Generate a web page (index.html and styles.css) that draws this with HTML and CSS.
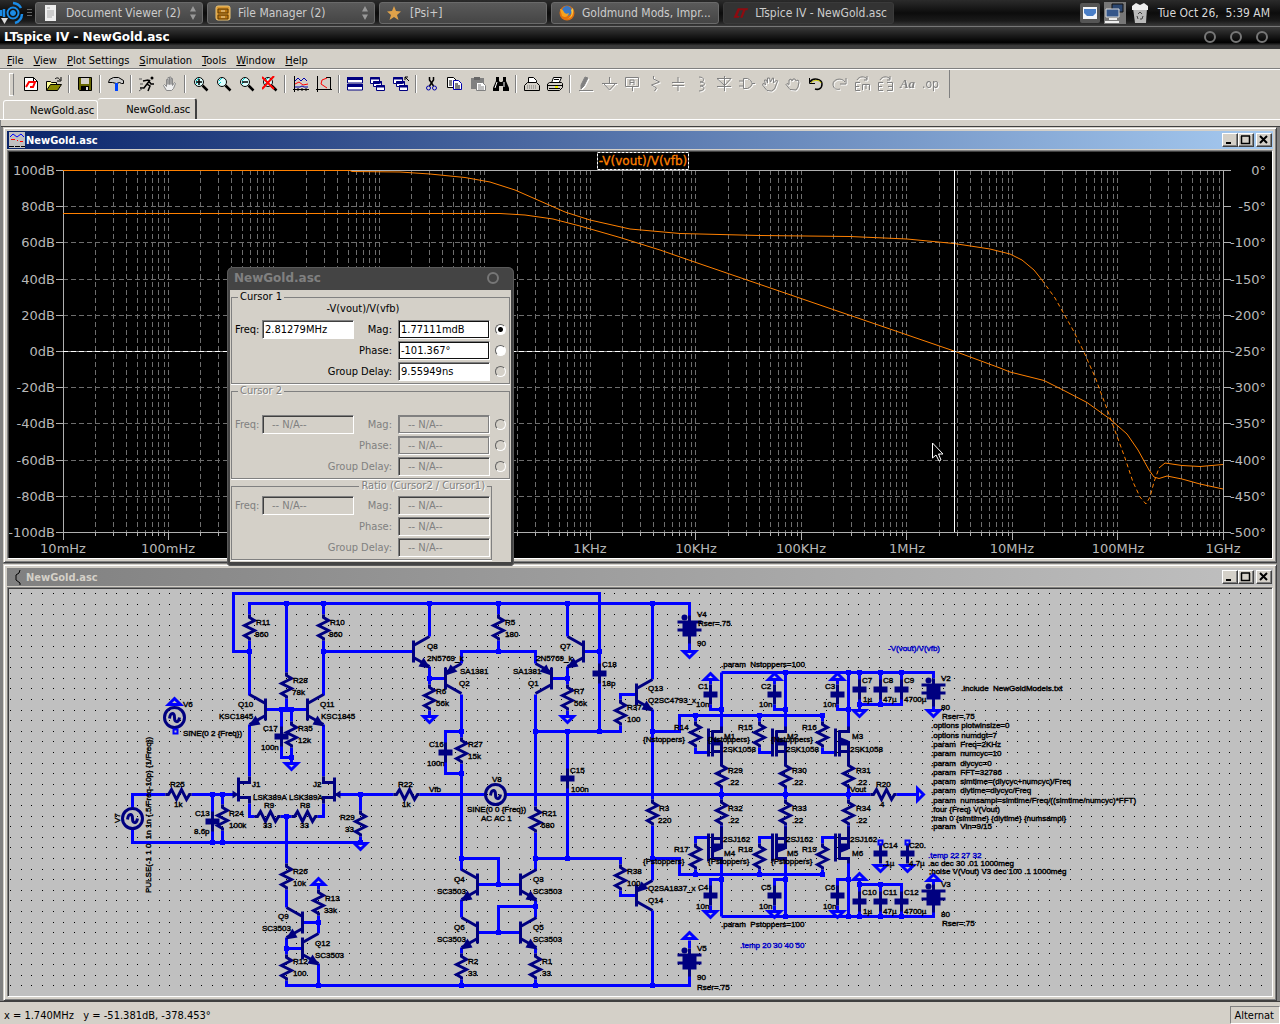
FILE: index.html
```html
<!DOCTYPE html>
<html lang="en">
<head>
    <meta charset="UTF-8">
    <meta name="viewport" content="width=device-width, initial-scale=1.0">
    <title>LTspice IV - NewGold.asc</title>
    <link rel="stylesheet" href="styles.css">
</head>
<body>

<header class="panel">
    <button type="button" class="launcher" aria-label="Menu">
        <svg width="24" height="24" viewBox="0 0 24 24" fill="none" stroke="#1b8be6">
            <circle cx="13" cy="12" r="2.5" fill="#1b8be6"/>
            <circle cx="13" cy="12" r="5.5" stroke-width="2"/>
            <path d="M13 2a10 10 0 0 1 8 5M22 13a10 10 0 0 1-7 9M4 8v8M1 9v6" stroke-width="2.5"/>
            <path d="M1 17h7l-3.500 6z" fill="#ddd" stroke="none"/>
        </svg>
    </button>
    <span class="grip"></span>
    <nav class="tasks">
        <button type="button" class="task">
            <svg width="18" height="18" viewBox="0 0 18 18"><path d="M3 1h11v16H3z" fill="#eee"/><path d="M5 4h3M5 7h7M5 9h7M5 11h7M5 13h5" stroke="#aaa"/></svg>
            <span>Document Viewer (2)</span><i class="spin"></i>
        </button>
        <button type="button" class="task">
            <svg width="18" height="18" viewBox="0 0 18 18"><rect x="2" y="2" width="14" height="14" rx="2" fill="#d9962f" stroke="#ecc578"/><path d="M4 5h10v4H4zM4 11h10v4H4z" fill="#b97510" stroke="#5c3b06"/><path d="M7 7h4M7 13h4" stroke="#f5dfae"/></svg>
            <span>File Manager (2)</span><i class="spin"></i>
        </button>
        <button type="button" class="task">
            <svg width="18" height="18" viewBox="0 0 18 18"><path d="M8 2l2 5 5 .5-4 3.500 1.500 5L8 13l-4.500 3L5 11 1 7.500 6 7z" fill="#e0a24a"/></svg>
            <span>[Psi+]</span>
        </button>
        <button type="button" class="task">
            <svg width="18" height="18" viewBox="0 0 18 18"><circle cx="9" cy="9" r="7.500" fill="#e0700d"/><circle cx="9" cy="7" r="5" fill="#3a78c4"/><path d="M2 5c2 0 3 1 4 3s3 2 5 1c-1 4-4 5-7 3z" fill="#f6a21d"/><path d="M15 4c1 6-1 10-6 11 5-2 5-6 4-9z" fill="#f9c440"/></svg>
            <span>Goldmund Mods, Impr...</span>
        </button>
        <button type="button" class="task active">
            <svg width="18" height="18" viewBox="0 0 18 18"><path d="M6 4H17L16 6H14L11 14H8.500L11.500 6H8L5.500 12H8L7 14H1.500L2.500 12z" fill="#8e0b10"/></svg>
            <span>LTspice IV - NewGold.asc</span>
        </button>
    </nav>
    <div class="tray">
        <svg width="20" height="20" viewBox="0 0 20 20"><rect width="20" height="20" rx="2" fill="#555"/><path d="M3 4h14v12H3z" fill="#f4f6fa"/><path d="M4 6h12v4l-3 3H7l-3-3z" fill="#4a7fc8"/></svg>
        <svg width="22" height="22" viewBox="0 0 22 22"><rect width="22" height="22" fill="#777"/><path d="M8 2h11v8H8z" fill="#2c4770" stroke="#111"/><path d="M2 7h13v8H2z" fill="#35568a" stroke="#ddd"/><path d="M5 17h8M1 20h14" stroke="#eee" stroke-width="2"/></svg>
        <svg width="20" height="22" viewBox="0 0 20 22"><path d="M3 6h14l-1 15H5z" fill="#b9b9b9"/><path d="M2 4l4-3 4 2 4-2 4 3v4H2z" fill="#eee"/><path d="M8 12l2-2 2 2M13 14l-1 3h-2M8 17l-1-3" stroke="#444" fill="none"/></svg>
        <time>Tue Oct 26,&nbsp; 5:39 AM</time>
    </div>
</header>

<div class="app-title">
    <h1>LTspice IV - NewGold.asc</h1>
    <span class="knobs"><button type="button" aria-label="Minimize"></button><button type="button" aria-label="Maximize"></button><button type="button" aria-label="Close"></button></span>
</div>

<nav class="menubar">
    <a href="#"><u>F</u>ile</a>
    <a href="#"><u>V</u>iew</a>
    <a href="#"><u>P</u>lot Settings</a>
    <a href="#"><u>S</u>imulation</a>
    <a href="#"><u>T</u>ools</a>
    <a href="#"><u>W</u>indow</a>
    <a href="#"><u>H</u>elp</a>
</nav>

<div class="toolbar">
    <button type="button" aria-label="New schematic"><svg viewBox="0 0 16 16"><path d="M1.500 1.500h9l4 4v9h-13z" fill="#fff" stroke="#000"/><path d="M10.500 1.500v4h4" fill="none" stroke="#000"/><path d="M3 11l3-5h6l-2 5H7" fill="none" stroke="#f00" stroke-width="2"/></svg></button>
    <button type="button" aria-label="Open"><svg viewBox="0 0 16 16"><path d="M.5 14V5.500h4l1 1h5V9" fill="#ff9" stroke="#000"/><path d="M.5 14.500l4-6h11l-4 6z" fill="#880" stroke="#000"/><path d="M9 3c2-2 4-1 5 1M15 1v4h-4" fill="none" stroke="#000"/></svg></button>
    <i class="sep"></i>
    <button type="button" aria-label="Save"><svg viewBox="0 0 16 16"><path d="M1.500 1.500h13v13h-12l-1-1z" fill="#660" stroke="#000"/><path d="M4 2h8v6H4z" fill="#d4d0c8"/><path d="M4 10h8v4H4z" fill="#000"/><path d="M9 11h2v3H9z" fill="#ddd"/></svg></button>
    <i class="sep"></i>
    <button type="button" aria-label="Control panel"><svg viewBox="0 0 16 16"><path d="M.5 6.500l1-3 4-2h5l5 3v3h-2l-2-1-3 1-4-1z" fill="#ccc" stroke="#000"/><path d="M8.500 7v8" stroke="#04f" stroke-width="3"/></svg></button>
    <i class="sep"></i>
    <button type="button" aria-label="Run"><svg viewBox="0 0 16 16"><path d="M11 4L8 8l3 2-2 5M8 8l-3 4H1M4 5l5-1 3 4h3" fill="none" stroke="#000" stroke-width="1.500"/><circle cx="13" cy="2" r="1.500"/><path d="M0 3h3M1 8h3M0 15l4-3" stroke="#555"/></svg></button>
    <button type="button" aria-label="Halt"><svg viewBox="0 0 16 16"><path d="M4.500 14.500l-3-5 1-1 2 2v-7h1.500v5-7h1.500v7-7.500h1.500v7.500-6h1.500v7l2-3 1 1-2 5-2 2z" fill="#eee" stroke="#888"/></svg></button>
    <i class="sep"></i>
    <button type="button" aria-label="Zoom in"><svg viewBox="0 0 16 16"><use href="#lens"/><path d="M3 6h6M6 3v6" stroke="#000" stroke-width="1.500"/></svg></button>
    <button type="button" aria-label="Pan"><svg viewBox="0 0 16 16"><use href="#lens"/></svg></button>
    <button type="button" aria-label="Zoom out"><svg viewBox="0 0 16 16"><use href="#lens"/><path d="M3 6h6" stroke="#000" stroke-width="1.500"/></svg></button>
    <button type="button" aria-label="Zoom full"><svg viewBox="0 0 16 16"><use href="#lens"/><path d="M0 1l12 12M12 0L0 13" stroke="#f00" stroke-width="2"/></svg></button>
    <i class="sep"></i>
    <button type="button" aria-label="Autorange"><svg viewBox="0 0 16 16" fill="none"><path d="M1.500 0v16M0 13.500h16M5 12v3M9 12v3M13 12v3" stroke="#000"/><path d="M2 5l3-3 3 3 3-3 3 3" stroke="#00a"/><path d="M2 8l4-2 4 3 5-1" stroke="#f00"/><path d="M2 11h5l2-1 2 1h4" stroke="#00a"/></svg></button>
    <button type="button" aria-label="Plot settings"><svg viewBox="0 0 16 16" fill="none"><path d="M1.500 0v16M0 13.500h16M14.500 1v12M10 1.500h5" stroke="#000"/><path d="M11 2L6 4 5 8l6 4" stroke="#f00"/></svg></button>
    <i class="sep"></i>
    <button type="button" aria-label="Tile"><svg viewBox="0 0 16 16"><path d="M.5 1.500h15v5.500H.5zM.5 8.500h15V14H.5z" fill="#fff" stroke="#000080"/><path d="M0 2.500h16M0 9.500h16" stroke="#000080" stroke-width="3"/></svg></button>
    <button type="button" aria-label="Cascade"><svg viewBox="0 0 16 16"><use href="#cascade"/></svg></button>
    <button type="button" aria-label="Close all"><svg viewBox="0 0 16 16"><use href="#cascade"/><path d="M12 1l4 4M12 4V1h3" fill="none" stroke="#000"/></svg></button>
    <i class="sep"></i>
    <button type="button" aria-label="Cut"><svg viewBox="0 0 16 16" fill="none"><path d="M5.500 1v3l4 6M9.500 1v3l-4 6" stroke="#000" stroke-width="1.500"/><circle cx="4.500" cy="12" r="2" stroke="#00a"/><circle cx="10.500" cy="12" r="2" stroke="#00a"/></svg></button>
    <button type="button" aria-label="Copy"><svg viewBox="0 0 16 16" fill="#fff"><path d="M.5 1.500h6l3 3v7h-9z" stroke="#000"/><path d="M6.500 4.500h5l3 3v6h-8z" stroke="#00a"/><path d="M2 5h3M2 7h3M2 9h3M8 8h3M8 10h5M8 12h5" stroke="#000"/></svg></button>
    <button type="button" aria-label="Paste"><svg viewBox="0 0 16 16"><path d="M1 2h13v11H1z" fill="#808080"/><path d="M4 1h6v3H4z" fill="#666"/><path d="M6.500 6.500h6l3 3v5h-9z" fill="#fff" stroke="#808080"/><path d="M8 9h3M8 11h6M8 13h6" stroke="#808080"/></svg></button>
    <button type="button" aria-label="Find"><svg viewBox="0 0 16 16"><path d="M3 1h3v4l1 1h2l1-1V1h3v4l3 7v3h-6v-5H6v5H0v-3l3-7z"/><path d="M4 6l-2 6M11 6v5" stroke="#fff"/></svg></button>
    <i class="sep"></i>
    <button type="button" aria-label="Print preview"><svg viewBox="0 0 16 16"><path d="M4.500 6.500v-5h5l3 3v2" fill="#fff" stroke="#000"/><path d="M.5 14.500v-5l3-3h9l3 3v5z" fill="#d4d0c8" stroke="#000"/><path d="M3 10h10M3 12h10" stroke="#777" stroke-dasharray="1 1"/></svg></button>
    <button type="button" aria-label="Print"><svg viewBox="0 0 16 16"><path d="M4.500 7l2-5.500h8L12 7" fill="#fff" stroke="#000"/><path d="M.5 8l2-1.500h12l1 1v4l-3 3H1l-.5-1z" fill="#d4d0c8" stroke="#000"/><path d="M1 9.500h14M2 12.500h11M7 3.500h5" stroke="#000"/><path d="M8 11h3" stroke="#ee0" stroke-width="2"/></svg></button>
    <i class="sep"></i>
    <button type="button" disabled aria-label="Wire"><svg viewBox="0 0 16 16"><path d="M7 1L3 9v4l3-3 4-8z" fill="#808080"/><path d="M1 14.500h14"/></svg></button>
    <button type="button" disabled aria-label="Ground"><svg viewBox="0 0 16 16"><path d="M8.500 1v6M1 7.500h15M3 8l5.500 6L14 8"/></svg></button>
    <button type="button" disabled aria-label="Label net"><svg viewBox="0 0 16 16"><path d="M1.500 1.500h13v9h-13zM8.500 10v5M6 9V4h4v5M6 6.500h4"/></svg></button>
    <button type="button" disabled aria-label="Resistor"><svg viewBox="0 0 16 16"><path d="M6.500 0l0 3 6 3-8 3 5 3-2 3"/></svg></button>
    <button type="button" disabled aria-label="Capacitor"><svg viewBox="0 0 16 16"><path d="M8 1v5M8 10v5M2 6.500h12M2 9.500h12"/></svg></button>
    <button type="button" disabled aria-label="Inductor"><svg viewBox="0 0 16 16"><path d="M6 1c6 0 6 5 1 5 6 0 6 4 0 4 6 0 5 5-1 5"/></svg></button>
    <button type="button" disabled aria-label="Diode"><svg viewBox="0 0 16 16"><path d="M8.500 0v15M1 2.500h14L8.500 9.500zM1 10.500h14"/></svg></button>
    <button type="button" disabled aria-label="Component"><svg viewBox="0 0 16 16"><path d="M4.500 2.500h4c6 3 6 7 0 10h-4zM0 5h4M0 10h4M13 7.500h3"/></svg></button>
    <button type="button" disabled aria-label="Move"><svg viewBox="0 0 16 16"><path d="M5 14.500L.5 9l1-2 2 2-1-5 2 0 1 3V2h2l1 4 2-4h1v5l3-3 1 1-3 8-3 2z"/></svg></button>
    <button type="button" disabled aria-label="Drag"><svg viewBox="0 0 16 16"><path d="M5 13.500l-4-5 1-1 2 1V4l2-1 1 2 1-2 2 0 1 2 2-1 1 2-1 5-2 3z"/></svg></button>
    <button type="button" aria-label="Undo"><svg viewBox="0 0 16 16" fill="none"><path d="M2 6c3-5 12-3 12 2s-4 6-7 5" stroke="#000" stroke-width="1.500"/><path d="M3 7c3-4 9-3 10 0" stroke="#cc0"/><path d="M1.500 2v5.500H7" stroke="#000"/></svg></button>
    <button type="button" disabled aria-label="Redo"><svg viewBox="0 0 16 16"><path d="M14 6C11 1 2 3 2 8s4 6 7 5M15 2v6H9"/></svg></button>
    <button type="button" disabled aria-label="Mirror"><svg viewBox="0 0 16 16"><path d="M6 6.500H1.500v8H6M1 10.500h4M8.500 14V8.500h7V14M12 9v4M3 4c2-4 8-4 10-1M13 0v4h-3"/></svg></button>
    <button type="button" disabled aria-label="Rotate"><svg viewBox="0 0 16 16"><path d="M6 6.500H1.500v8H6M1 10.500h4M10 6.500h5.500v8H10M15 10.500h-4M3 4c2-4 8-4 10-1M13 0v4h-3"/></svg></button>
    <button type="button" disabled class="txt"><i>Aa</i></button>
    <button type="button" disabled class="txt op">.op</button>
</div>

<div class="tabs">
    <a href="#" class="tab">NewGold.asc</a>
    <a href="#" class="tab current">NewGold.asc</a>
</div>

<main class="mdi">
    <section class="window">
        <div class="titlebar">
            <svg width="16" height="16" viewBox="0 0 16 16"><path d="M0 0h16v16H0z" fill="#c0c0c0"/><path d="M1 5l3-3 4 3 4-3 3 3" fill="none" stroke="#00f"/><path d="M2 7.500h4M8 8.500h1M11 9.500h3" stroke="#f00"/><path d="M0 14.500h16" stroke="#000" stroke-dasharray="5 1"/></svg>
            <h2>NewGold.asc</h2>
            <span class="controls"><button type="button" aria-label="Minimize"><svg viewBox="0 0 12 10"><path d="M2 8h5" stroke-width="2"/></svg></button><button type="button" aria-label="Maximize"><svg viewBox="0 0 12 10"><path d="M1 1h9M1.500 1v7.500h8V1" stroke-width="1.500"/></svg></button><button type="button" class="close" aria-label="Close"><svg viewBox="0 0 12 10"><path d="M2 1l7 7M9 1L2 8" stroke-width="2"/></svg></button></span>
        </div>
        <div class="client">
            <svg class="plot" viewBox="9 152 1263 406">
                <defs>
                    <path id="decade" d="M32.500 0V362M50.500 0V362M63.500 0V362M74.500 0V362M82.500 0V362M89.500 0V362M95.500 0V362M101.500 0V362M105.500 0V362"/>
                    <path id="ticks" d="M32.500 0v4M50.500 0v4M63.500 0v4M74.500 0v4M82.500 0v4M89.500 0v4M95.500 0v4M101.500 0v4M105.500 0v8"/>
                </defs>
                <g class="grid">
                    <use href="#decade" x="63" y="170"/><use href="#decade" x="168" y="170"/><use href="#decade" x="274" y="170"/><use href="#decade" x="379" y="170"/><use href="#decade" x="485" y="170"/><use href="#decade" x="590" y="170"/><use href="#decade" x="696" y="170"/><use href="#decade" x="801" y="170"/><use href="#decade" x="907" y="170"/><use href="#decade" x="1012" y="170"/><use href="#decade" x="1118" y="170"/>
                    <path d="M63 206.500H1223M63 242.500H1223M63 279.500H1223M63 315.500H1223M63 351.500H1223M63 387.500H1223M63 423.500H1223M63 460.500H1223M63 496.500H1223"/>
                </g>
                <g class="axis">
                    <path d="M56 170.500H1231M56 532.500H1231M63.500 170V540M1223.500 170V540"/>
                    <path d="M56 206.500h7M56 242.500h7M56 279.500h7M56 315.500h7M56 351.500h7M56 387.500h7M56 423.500h7M56 460.500h7M56 496.500h7M1223 206.500h8M1223 242.500h8M1223 279.500h8M1223 315.500h8M1223 351.500h8M1223 387.500h8M1223 423.500h8M1223 460.500h8M1223 496.500h8"/>
                    <use href="#ticks" x="63" y="532"/><use href="#ticks" x="168" y="532"/><use href="#ticks" x="274" y="532"/><use href="#ticks" x="379" y="532"/><use href="#ticks" x="485" y="532"/><use href="#ticks" x="590" y="532"/><use href="#ticks" x="696" y="532"/><use href="#ticks" x="801" y="532"/><use href="#ticks" x="907" y="532"/><use href="#ticks" x="1012" y="532"/><use href="#ticks" x="1118" y="532"/>
                </g>
                <g class="trace">
                    <path d="M63 213.500H500L525 215L553 219L580 226L620 237.500L660 250L696 262.500L954 351L1000 368L1010 372L1044 380.500L1063 390L1087 402.500L1110 419L1127 434L1138 450L1149 470L1154 477L1159 478.500L1167 476L1182 479L1200 484L1223 489"/>
                    <path d="M63 170.500H350L352 171.500L400 172L430 174L465 177.500L490 182L515 190L540 201L565 212L590 220L630 229L680 233.500L760 235.500L850 236.500L907 239L954 243.500L990 249L1010 254L1022 260L1034 270L1042 280"/>
                    <path class="dashed" d="M1042 280L1055 298L1073 330L1083 350L1095 377L1110 417L1125 458L1133 482L1140 497L1146 504L1150 497L1154 482L1159 468"/>
                    <path d="M1159 468L1165 463L1182 465.500L1200 466.500L1223 464.500"/>
                </g>
                <path d="M63 351.500H1223" stroke="#999"/>
                <path d="M63 351.500H1223" stroke="#fff" stroke-dasharray="5 3"/>
                <path d="M954.500 170V532" stroke="#fff"/>
                <g class="ylabels">
                    <text x="55" y="175">100dB</text><text x="55" y="211">80dB</text><text x="55" y="247">60dB</text><text x="55" y="284">40dB</text><text x="55" y="320">20dB</text><text x="55" y="356">0dB</text><text x="55" y="392">-20dB</text><text x="55" y="428">-40dB</text><text x="55" y="465">-60dB</text><text x="55" y="501">-80dB</text><text x="55" y="537">-100dB</text>
                    <text x="1266" y="175">0°</text><text x="1266" y="211">-50°</text><text x="1266" y="247">-100°</text><text x="1266" y="284">-150°</text><text x="1266" y="320">-200°</text><text x="1266" y="356">-250°</text><text x="1266" y="392">-300°</text><text x="1266" y="428">-350°</text><text x="1266" y="465">-400°</text><text x="1266" y="501">-450°</text><text x="1266" y="537">-500°</text>
                </g>
                <g class="xlabels">
                    <text x="63" y="553">10mHz</text><text x="168" y="553">100mHz</text><text x="590" y="553">1KHz</text><text x="696" y="553">10KHz</text><text x="801" y="553">100KHz</text><text x="907" y="553">1MHz</text><text x="1012" y="553">10MHz</text><text x="1118" y="553">100MHz</text><text x="1223" y="553">1GHz</text>
                    <text class="name" x="643" y="165">-V(vout)/V(vfb)</text>
                </g>
                <rect x="597.500" y="152.500" width="91" height="17" fill="none" stroke="#fff" stroke-dasharray="3 1"/>
                <path d="M932.500 443v15l3.500-3 3 6 2-1-2.500-6h4.500z" fill="#000" stroke="#fff"/>
            </svg>
        </div>
    </section>

    <section class="window inactive">
        <div class="titlebar">
            <svg width="16" height="16" viewBox="0 0 16 16"><path d="M11 1l-1 3-3 2v5l4 3v2" fill="none" stroke="#000"/></svg>
            <h2>NewGold.asc</h2>
            <span class="controls"><button type="button" aria-label="Minimize"><svg viewBox="0 0 12 10"><path d="M2 8h5" stroke-width="2"/></svg></button><button type="button" aria-label="Maximize"><svg viewBox="0 0 12 10"><path d="M1 1h9M1.500 1v7.500h8V1" stroke-width="1.500"/></svg></button><button type="button" class="close" aria-label="Close"><svg viewBox="0 0 12 10"><path d="M2 1l7 7M9 1L2 8" stroke-width="2"/></svg></button></span>
        </div>
        <div class="client">
            <svg class="schematic" viewBox="9 589 1263 407">
                <defs>
                    <pattern id="dots" x="10" y="593" width="53" height="53" patternUnits="userSpaceOnUse">
                        <path id="dotrow" d="M0 .5h1M11 .5h1M21 .5h1M32 .5h1M43 .5h1" stroke="#000"/>
                        <use href="#dotrow" y="11"/><use href="#dotrow" y="21"/><use href="#dotrow" y="32"/><use href="#dotrow" y="42"/>
                    </pattern>
                    <!-- component symbols, origin on the top or left pin -->
                    <path id="res" class="part" d="M0 0V3L5 6L-5 11L5 16L-5 21L0 24V26"/>
                    <g id="resh"><use href="#res" transform="rotate(-90)"/></g>
                    <g id="cap"><path class="part" d="M0-10V10"/><path class="fill" d="M-7-3H7V3H-7z"/></g>
                    <path id="gnd" class="net" d="M-6 0H6L0 6z"/>
                    <path id="gndu" class="net" d="M-6 0H6L0-6z"/>
                    <path id="gndr" class="net" d="M0-6V6L6 0z"/>
                    <g id="npn"><path class="part" d="M0-11V11M0-6L16-15M0 6L16 15"/><path class="fill" d="M17 17L5 15L10 6z"/></g>
                    <g id="npnl"><use href="#npn" transform="scale(-1,1)"/></g>
                    <g id="pnp"><path class="part" d="M0-11V11M0-6L16-15M0 6L16 15"/><path class="fill" d="M0-3L5-14L12-7z"/></g>
                    <g id="pnpl"><use href="#pnp" transform="scale(-1,1)"/></g>
                    <g id="jfet"><path class="part" d="M0-17V7M0-12H11V-18M0 3H11V9"/><path class="fill" d="M0 0L-6-4V4z"/></g>
                    <g id="jfetl"><use href="#jfet" transform="scale(-1,1)"/></g>
                    <g id="nmos"><path class="part" d="M-13-14V14M-9-12V14M-10-11H0V-16M-10 0H0V21M-10 9H0"/><path class="fill" d="M-10-6L0-2V3H-10z"/></g>
                    <g id="pmos"><path class="part" d="M-13-14V14M-9-14V12M-10 11H0V16M-10 0H0V-21M-10-9H0"/><path class="fill" d="M-10-4H0V2L-10 6z"/></g>
                    <g id="src"><circle class="part" r="10"/><path class="part" d="M-5 1C-4-6 0-5 0 0S4 6 5 0"/></g>
                    <g id="bat"><path class="part" d="M0-5V23"/><path class="fill" d="M-7 0H7V16H-7zM-12 0H12V3H-12zM-12 8H12V11H-12z"/><circle class="fill" cx="-5" cy="-3" r="3"/></g>
                    <g id="stage">
                        <path class="net" d="M721 672V728M710 680V684M710 704V709H721M695 715V721M695 747V752H708M721 787V799M721 825V830M708 837H695V843M695 869V874M721 862V916M721 879H710V886M710 905V911"/>
                        <use href="#gndu" x="710" y="679"/><use href="#cap" x="710" y="694"/>
                        <use href="#res" x="695" y="721"/><use href="#nmos" x="721" y="742"/>
                        <use href="#res" x="721" y="762"/><use href="#res" x="721" y="799"/>
                        <use href="#pmos" x="721" y="847"/><use href="#res" x="695" y="843"/>
                        <use href="#cap" x="710" y="895"/><use href="#gnd" x="710" y="911"/>
                        <path class="node" d="M721 709h0M695 715h0M721 794h0M695 874h0M721 879h0"/>
                    </g>
                </defs>
                <rect x="9" y="589" width="1263" height="407" fill="url(#dots)"/>

                <g transform="translate(.5 .5)">
                    <!-- wires -->
                    <path class="net" d="M249 651H233V593H599V731M249 614V603H689V616M249 640V695M286 603V672M286 698V709M323 603V614M323 640V695M323 651H413M265 709H307M281 709V757H291M291 709V721M291 747V762M249 724V776M323 724V776M249 803V816H254M280 816H291M317 816H323V803M286 816V863M286 889V907M302 922H318M318 885V889M318 915V933M302 948H286M286 937V954M286 980V985H689V972M318 963V985M334 794H393M360 794V810M360 836V842M419 794H484M506 794H870M896 794H916M132 807V794H165M191 794H236M212 794V842M222 794V804M222 830V842M132 829V842H360M429 603V636M429 666V684M429 710V716M429 678H445M461 663V651H535V663M498 603V614M498 640V651M461 694V737M461 763V870M461 731H445V773H461M461 858H498V884M477 884H520M461 899V917M477 932H520M498 932V906H535M535 899V917M461 947V953M535 947V953M461 979V985M535 979V985M535 694V806M535 832V870M551 678H567M567 603V636M567 666V684M567 710V716M583 651H599M535 731H620V725M567 731V858M535 858H620V864M620 890V895H636M620 699V694H636M652 603V679M652 709V799M652 825V880M652 910V985M652 731H679V715H822M652 858H679V874H822M721 672H933V678M721 916H933V907M859 672V704H901V672M880 672V704M859 704V710M859 916V884H901V916M880 884V916M859 880V884M689 641V651M689 940V948M933 704V710M933 881V885"/>
                    <use href="#stage"/><use href="#stage" x="64"/><use href="#stage" x="127"/>

                    <!-- parts -->
                    <use href="#res" x="249" y="614"/><use href="#res" x="323" y="614"/><use href="#res" x="286" y="672"/><use href="#res" x="291" y="721"/>
                    <use href="#resh" x="254" y="816"/><use href="#resh" x="291" y="816"/><use href="#resh" x="165" y="794"/><use href="#resh" x="393" y="794"/><use href="#resh" x="870" y="794"/>
                    <use href="#res" x="360" y="810"/><use href="#res" x="222" y="804"/><use href="#res" x="286" y="863"/><use href="#res" x="318" y="889"/><use href="#res" x="286" y="954"/>
                    <use href="#res" x="429" y="684"/><use href="#res" x="567" y="684"/><use href="#res" x="498" y="614"/><use href="#res" x="461" y="737"/><use href="#res" x="535" y="806"/><use href="#res" x="461" y="953"/><use href="#res" x="535" y="953"/>
                    <use href="#res" x="620" y="699"/><use href="#res" x="652" y="799"/><use href="#res" x="620" y="864"/>
                    <use href="#cap" x="281" y="736"/><use href="#cap" x="212" y="821"/><use href="#cap" x="445" y="752"/><use href="#cap" x="599" y="673"/><use href="#cap" x="567" y="778"/>
                    <use href="#cap" x="859" y="689"/><use href="#cap" x="880" y="689"/><use href="#cap" x="901" y="689"/><use href="#cap" x="859" y="901"/><use href="#cap" x="880" y="901"/><use href="#cap" x="901" y="901"/><use href="#cap" x="880" y="853"/><use href="#cap" x="907" y="853"/>
                    <use href="#npnl" x="265" y="709"/><use href="#npn" x="307" y="709"/><use href="#npn" x="413" y="651"/><use href="#npnl" x="583" y="651"/><use href="#pnp" x="445" y="678"/><use href="#pnpl" x="551" y="678"/>
                    <use href="#npnl" x="302" y="922"/><use href="#npn" x="302" y="948"/><use href="#npnl" x="477" y="884"/><use href="#npn" x="520" y="884"/><use href="#npnl" x="477" y="932"/><use href="#npn" x="520" y="932"/>
                    <use href="#npn" x="636" y="694"/><use href="#pnp" x="636" y="895"/>
                    <use href="#jfet" x="238" y="794"/><use href="#jfetl" x="334" y="794"/>
                    <use href="#src" x="132" y="818"/><use href="#src" x="174" y="717"/><use href="#src" x="495" y="794"/>
                    <use href="#bat" x="689" y="620"/><use href="#bat" x="689" y="953"/><use href="#bat" x="933" y="683"/><use href="#bat" x="933" y="889"/>
                    <use href="#gnd" x="291" y="763"/><use href="#gnd" x="360" y="843"/><use href="#gnd" x="429" y="716"/><use href="#gnd" x="567" y="716"/><use href="#gnd" x="689" y="651"/><use href="#gnd" x="859" y="710"/><use href="#gnd" x="933" y="710"/><use href="#gnd" x="880" y="865"/><use href="#gnd" x="907" y="865"/>
                    <use href="#gndu" x="318" y="884"/><use href="#gndu" x="174" y="704"/><use href="#gndu" x="689" y="938"/><use href="#gndu" x="859" y="879"/><use href="#gndu" x="933" y="880"/><use href="#gndr" x="917" y="794"/>
                    <path class="pin" d="M173 729h4v4h-4zM878 840h4v4h-4zM905 840h4v4h-4z"/>
                    <path class="node" d="M249 651h0M286 603h0M323 603h0M323 651h0M281 709h0M286 709h0M291 709h0M291 757h0M286 816h0M318 922h0M286 948h0M318 985h0M360 794h0M360 842h0M212 794h0M222 794h0M212 842h0M222 842h0M429 603h0M498 603h0M567 603h0M652 603h0M429 678h0M567 678h0M498 651h0M599 651h0M461 731h0M461 773h0M461 858h0M498 884h0M498 932h0M535 906h0M535 731h0M567 731h0M599 731h0M535 858h0M567 858h0M461 985h0M535 985h0M652 985h0M652 731h0M652 858h0M785 672h0M848 672h0M859 672h0M880 672h0M901 672h0M859 704h0M880 704h0M785 916h0M848 916h0M859 916h0M880 916h0M901 916h0M859 884h0M880 884h0"/>
                </g>

                <!-- names and values -->
                <g class="labels">
                    <text x="183" y="707">V6</text><text x="183" y="736">SINE(0 2 {Freq})</text>
                    <text x="170" y="787">R25</text><text x="174" y="807">1k</text>
                    <text x="195" y="816">C13</text><text x="194" y="834">8.6p</text><text x="229" y="816">R24</text><text x="229" y="828">100k</text>
                    <text x="256" y="625">R11</text><text x="255" y="637">860</text><text x="330" y="625">R10</text><text x="329" y="637">860</text>
                    <text x="293" y="683">R28</text><text x="292" y="695">78k</text>
                    <text x="238" y="707">Q10</text><text x="219" y="719">KSC1845</text><text x="320" y="707">Q11</text><text x="321" y="719">KSC1845</text>
                    <text x="263" y="731">C17</text><text x="261" y="750">100n</text><text x="298" y="731">R35</text><text x="298" y="743">12k</text>
                    <text x="252" y="787">J1</text><text x="253" y="800">LSK389A</text><text x="313" y="787">J2</text><text x="289" y="800">LSK389A</text>
                    <text x="264" y="808">R9</text><text x="263" y="828">33</text><text x="300" y="808">R8</text><text x="300" y="828">33</text>
                    <text x="340" y="820">R29</text><text x="345" y="832">33</text><text x="398" y="787">R22</text><text x="402" y="807">1k</text>
                    <text x="293" y="874">R26</text><text x="293" y="886">10k</text><text x="325" y="901">R13</text><text x="324" y="913">33k</text>
                    <text x="278" y="919">Q9</text><text x="262" y="931">SC3503</text><text x="315" y="946">Q12</text><text x="315" y="958">SC3503</text>
                    <text x="293" y="964">R12</text><text x="293" y="976">100</text>
                    <text x="427" y="649">Q8</text><text x="427" y="661">2N5769_k</text><text x="460" y="674">SA1381</text><text x="459" y="686">Q2</text>
                    <text x="436" y="694">R6</text><text x="436" y="706">56k</text><text x="429" y="747">C16</text><text x="427" y="766">100n</text>
                    <text x="468" y="747">R27</text><text x="468" y="759">15k</text><text x="505" y="625">R5</text><text x="505" y="637">180</text>
                    <text x="560" y="649">Q7</text><text x="536" y="661">2N5769_k</text><text x="513" y="674">SA1381</text><text x="528" y="686">Q1</text>
                    <text x="574" y="694">R7</text><text x="574" y="706">56k</text><text x="602" y="667">C18</text><text x="602" y="686">18p</text>
                    <text x="570" y="773">C15</text><text x="571" y="792">100n</text><text x="492" y="782">V8</text><text x="429" y="792">Vfb</text>
                    <text x="467" y="812">SINE(0 0 {Freq})</text><text x="481" y="821">AC AC 1</text><text x="542" y="816">R21</text><text x="541" y="828">680</text>
                    <text x="454" y="882">Q4</text><text x="437" y="894">SC3503</text><text x="533" y="882">Q3</text><text x="533" y="894">SC3503</text>
                    <text x="454" y="930">Q6</text><text x="437" y="942">SC3503</text><text x="533" y="930">Q5</text><text x="533" y="942">SC3503</text>
                    <text x="468" y="964">R2</text><text x="468" y="976">33</text><text x="542" y="964">R1</text><text x="542" y="976">33</text>
                    <text x="697" y="617">V4</text><text x="698" y="626">Rser=.75</text><text x="697" y="646">90</text>
                    <text x="648" y="691">Q13</text><text x="648" y="703">Q2SC4793_x</text><text x="627" y="710">R37</text><text x="627" y="722">100</text>
                    <text x="659" y="811">R3</text><text x="658" y="823">220</text><text x="627" y="874">R38</text><text x="627" y="886">100</text>
                    <text x="648" y="891">Q2SA1837_x</text><text x="648" y="903">Q14</text><text x="697" y="951">V5</text><text x="697" y="980">90</text><text x="697" y="990">Rser=.75</text>
                    <text x="721" y="667">.param  Nstoppers=100</text><text x="721" y="927">.param  Pstoppers=100</text>
                    <text x="698" y="689">C1</text><text x="696" y="707">10n</text><text x="761" y="689">C2</text><text x="759" y="707">10n</text><text x="825" y="689">C3</text><text x="823" y="707">10n</text>
                    <text x="674" y="730">R14</text><text x="738" y="730">R15</text><text x="802" y="730">R16</text>
                    <text x="643" y="742">{Nstoppers}</text><text x="708" y="742">{Nstoppers}</text><text x="771" y="742">{Nstoppers}</text>
                    <text x="724" y="739">M1</text><text x="787" y="739">M2</text><text x="852" y="739">M3</text>
                    <text x="723" y="752">2SK1058</text><text x="786" y="752">2SK1058</text><text x="850" y="752">2SK1058</text>
                    <text x="728" y="773">R29</text><text x="792" y="773">R30</text><text x="856" y="773">R31</text>
                    <text x="728" y="785">.22</text><text x="792" y="785">.22</text><text x="856" y="785">.22</text>
                    <text x="728" y="811">R32</text><text x="792" y="811">R33</text><text x="856" y="811">R34</text>
                    <text x="728" y="823">.22</text><text x="792" y="823">.22</text><text x="856" y="823">.22</text>
                    <text x="723" y="842">2SJ162</text><text x="786" y="842">2SJ162</text><text x="850" y="842">2SJ162</text>
                    <text x="724" y="856">M4</text><text x="787" y="856">M5</text><text x="852" y="856">M6</text>
                    <text x="674" y="852">R17</text><text x="738" y="852">R18</text><text x="802" y="852">R19</text>
                    <text x="643" y="864">{Pstoppers}</text><text x="708" y="864">{Pstoppers}</text><text x="771" y="864">{Pstoppers}</text>
                    <text x="698" y="890">C4</text><text x="696" y="909">10n</text><text x="761" y="890">C5</text><text x="759" y="909">10n</text><text x="825" y="890">C6</text><text x="823" y="909">10n</text>
                    <text x="862" y="683">C7</text><text x="883" y="683">C8</text><text x="904" y="683">C9</text><text x="863" y="702">1µ</text><text x="883" y="702">47µ</text><text x="904" y="702">4700µ</text>
                    <text x="862" y="895">C10</text><text x="883" y="895">C11</text><text x="904" y="895">C12</text><text x="863" y="914">1µ</text><text x="883" y="914">47µ</text><text x="904" y="914">4700µ</text>
                    <text x="850" y="792">Vout</text><text x="876" y="787">R20</text><text x="880" y="807">4</text>
                    <text x="883" y="848">C14</text><text x="883" y="866">.1µ</text><text x="909" y="848">C20.</text><text x="909" y="866">4.7µ</text>
                    <text x="941" y="681">V2</text><text x="941" y="710">80</text><text x="942" y="719">Rser=.75</text>
                    <text x="941" y="887">V3</text><text x="941" y="917">80</text><text x="942" y="926">Rser=.75</text>
                    <text x="961" y="691">.include  NewGoldModels.txt</text>
                    <text x="931" y="728">.options plotwinsize=0</text>
                    <text x="931" y="738">.options numdgt=7</text>
                    <text x="931" y="747">.param  Freq=2KHz</text>
                    <text x="931" y="756">.param  numcyc=10</text>
                    <text x="931" y="766">.param  dlycyc=0</text>
                    <text x="931" y="775">.param  FFT=32786</text>
                    <text x="931" y="784">.param  simtime=(dlycyc+numcyc)/Freq</text>
                    <text x="931" y="793">.param  dlytime=dlycyc/Freq</text>
                    <text x="931" y="803">.param  numsampl=simtime/Freq/((simtime/numcyc)*FFT)</text>
                    <text x="931" y="812">.four {Freq} V(Vout)</text>
                    <text x="931" y="821">;tran 0 {simtime} {dlytime} {numsampl}</text>
                    <text x="931" y="829">.param  Vin=9/15</text>
                    <text x="928" y="866">.ac dec 30 .01 1000meg</text>
                    <text x="929" y="874">;noise V(Vout) V3 dec 100 .1 1000meg</text>
                    <text transform="translate(120 823) rotate(-90)">V7</text>
                    <text transform="translate(151 893) rotate(-90)">PULSE(-1 1 0  1n 1n {.5/Freq-10p} {1/Freq})</text>
                    <g class="comment">
                        <text x="888" y="651">-V(vout)/V(vfb)</text>
                        <text x="928" y="858">.temp 22 27 32</text>
                        <text x="740" y="948">.temp 20 30 40 50</text>
                    </g>
                </g>
            </svg>
        </div>
    </section>
</main>

<footer class="status">
    <span>x = 1.740MHz &nbsp;&nbsp;y = -51.381dB, -378.453°</span>
    <span class="cell">Alternat</span>
</footer>

<form class="dialog">
    <div class="dialog-title"><h2>NewGold.asc</h2><button type="button" aria-label="Close"></button></div>
    <div class="dialog-body">
        <fieldset>
            <legend>Cursor 1</legend>
            <p class="channel">-V(vout)/V(vfb)</p>
            <div class="readout">
                <label for="freq1">Freq:</label><input id="freq1" type="text" value="2.81279MHz">
                <label for="mag1">Mag:</label><input id="mag1" class="strong" type="text" value="1.77111mdB"><input type="radio" name="c1" aria-label="Show magnitude" checked>
                <label for="ph1" class="third">Phase:</label><input id="ph1" class="strong" type="text" value="-101.367°"><input type="radio" name="c1" aria-label="Show phase">
                <label for="gd1" class="third">Group Delay:</label><input id="gd1" type="text" value="9.55949ns"><input type="radio" name="c1" aria-label="Show group delay" class="dim">
            </div>
        </fieldset>
        <fieldset disabled>
            <legend>Cursor 2</legend>
            <p class="channel"></p>
            <div class="readout">
                <label for="freq2">Freq:</label><input id="freq2" type="text" value="-- N/A--">
                <label for="mag2">Mag:</label><input id="mag2" class="strong" type="text" value="-- N/A--"><input type="radio" name="c2" aria-label="Show magnitude">
                <label for="ph2" class="third">Phase:</label><input id="ph2" class="strong" type="text" value="-- N/A--"><input type="radio" name="c2" aria-label="Show phase">
                <label for="gd2" class="third">Group Delay:</label><input id="gd2" type="text" value="-- N/A--"><input type="radio" name="c2" aria-label="Show group delay">
            </div>
        </fieldset>
        <fieldset disabled class="ratio">
            <legend>Ratio (Cursor2 / Cursor1)</legend>
            <div class="readout">
                <label for="freq3">Freq:</label><input id="freq3" type="text" value="-- N/A--">
                <label for="mag3">Mag:</label><input id="mag3" type="text" value="-- N/A--">
                <label for="ph3" class="third">Phase:</label><input id="ph3" type="text" value="-- N/A--">
                <label for="gd3" class="third">Group Delay:</label><input id="gd3" type="text" value="-- N/A--">
            </div>
        </fieldset>
    </div>
</form>

<!-- shared toolbar shapes -->
<svg class="shared" width="0" height="0">
    <defs>
        <g id="lens"><circle cx="6" cy="6" r="4.500" fill="#dff" stroke="#000"/><path d="M3 5l3-3M3 8l2-2" stroke="#0cc"/><path d="M9.500 9.500l5 5" stroke="#000" stroke-width="2.500"/></g>
        <g id="cascade" fill="#fff" stroke="#000080"><path d="M.5 1.500h9v6h-9zM3.500 5.500h8v5h-8zM6.500 9.500h8v5h-8z"/><path d="M0 2.500h10M3 6.500h9M6 10.500h9" stroke-width="2"/></g>
    </defs>
</svg>

</body>
</html>
```
FILE: styles.css
```css
* {
    box-sizing: border-box;
}

body {
    margin: 0;
    min-height: 100vh;
    display: flex;
    flex-direction: column;
    position: relative;
    background-color: #d4d0c8;
    font-family: "DejaVu Sans Condensed", "DejaVu Sans", sans-serif;
    font-size: 11px;
    color: #000;
}

h1, h2, p {
    margin: 0;
}

button {
    font: inherit;
    padding: 0;
    border: none;
    background: none;
}

a {
    color: inherit;
    text-decoration: none;
}

.shared {
    position: absolute;
}

/* desktop panel */
.panel {
    height: 26px;
    display: flex;
    align-items: center;
    background: linear-gradient(#2b2b2b, #0c0c0c 50%, #1a1a1a 80%, #3a3a3a);
    color: #d8d8d8;
}

.launcher {
    width: 24px;
    height: 24px;
}

.grip {
    width: 5px;
    height: 8px;
    margin: 0 3px;
    background: repeating-linear-gradient(#666 0 1px, transparent 1px 3px);
}

.tasks {
    flex: 1;
    display: flex;
    gap: 4px;
}

.task {
    width: 168px;
    height: 22px;
    display: flex;
    align-items: center;
    gap: 6px;
    padding: 0 6px;
    border: 1px solid #6a6a6a;
    border-radius: 3px;
    background: linear-gradient(#5a5a5a, #454545);
    color: #ccc;
    font-size: 12px;
    white-space: nowrap;
}

.task.active {
    width: 171px;
    padding-left: 8px;
    border-color: #3a3a3a;
    background: #333;
}

.spin {
    margin-left: auto;
    width: 6px;
    height: 14px;
    background: #999;
    clip-path: polygon(50% 0, 100% 40%, 0 40%, 0 60%, 100% 60%, 50% 100%, 0 60%, 0 40%);
}

.tray {
    display: flex;
    align-items: center;
    gap: 4px;
    padding-right: 10px;
    font-size: 12px;
}

.tray time {
    margin-left: 4px;
}

/* application frame */
.app-title {
    height: 23px;
    display: flex;
    align-items: center;
    justify-content: space-between;
    padding: 0 12px 3px 4px;
    border-top: 1px solid #777;
    background: linear-gradient(#3a3a3a, #111 50%, #000 70%, #3c3c3c 85%);
    color: #fff;
}

.app-title h1 {
    font: bold 12px "DejaVu Sans", sans-serif;
}

.knobs {
    display: flex;
    gap: 14px;
}

.knobs button,
.dialog-title button {
    width: 12px;
    height: 12px;
    border: 2px solid #777;
    border-radius: 50%;
}

.menubar {
    height: 21px;
    display: flex;
    align-items: center;
    gap: 10px;
    padding: 2px 7px 0;
    border-bottom: 1px solid #fff;
    box-shadow: inset 0 -1px #808080;
}

.toolbar {
    height: 28px;
    display: flex;
    align-items: center;
    align-self: flex-start;
    padding: 0 7px 0 9px;
    border-right: 1px solid #808080;
}

.toolbar::before {
    content: "";
    width: 3px;
    height: 21px;
    margin-right: 5px;
    border: 1px solid #fff;
    border-right-color: #808080;
}

.toolbar button {
    width: 23px;
    height: 22px;
    display: flex;
    align-items: center;
    justify-content: center;
}

.toolbar svg {
    width: 16px;
    height: 16px;
}

.toolbar button:disabled {
    color: #808080;
    filter: drop-shadow(1px 1px 0 #fff);
}

.toolbar button:disabled svg {
    fill: none;
    stroke: #808080;
}

.toolbar .txt {
    font: bold 13px "Liberation Serif", serif;
}

.toolbar .op {
    font: 12px "DejaVu Sans Condensed", sans-serif;
}

.sep {
    width: 2px;
    height: 18px;
    margin: 0 3px;
    border-left: 1px solid #808080;
    border-right: 1px solid #fff;
}

.tabs {
    height: 22px;
    display: flex;
    align-items: flex-end;
    padding-left: 3px;
    border-bottom: 1px solid #fff;
}

.tab {
    height: 19px;
    padding: 3px 3px 0 26px;
    border: 1px solid #fff;
    border-bottom: none;
    border-radius: 3px 3px 0 0;
    line-height: 13px;
}

.tab.current {
    height: 21px;
    padding: 4px 5px 0 28px;
    border-right: 2px solid #404040;
    border-left: none;
}

/* document windows */
.mdi {
    flex: 1;
    padding: 7px 3px 0 2px;
    border-left: 1px solid #808080;
    box-shadow: inset 0 6px #d4d0c8, inset 0 7px #404040;
    background: #808080;
}

.window {
    border: 1px solid;
    border-color: #d4d0c8 #404040 #404040 #d4d0c8;
    box-shadow: inset 1px 1px #fff, inset -1px -1px #808080;
    background: #d4d0c8;
    padding: 3px;
}

.window + .window {
    margin-top: 1px;
}

.titlebar {
    height: 18px;
    display: flex;
    align-items: center;
    gap: 1px;
    padding: 0 1px 0 2px;
    margin-bottom: 1px;
    background: linear-gradient(90deg, #0a246a, #a6caf0);
    color: #fff;
}

.inactive .titlebar {
    background: linear-gradient(90deg, #808080, #c0c0c0);
    color: #d4d0c8;
}

.titlebar h2,
.dialog-title h2 {
    font-size: 11px;
}

.controls {
    margin-left: auto;
    display: flex;
}

.controls button {
    width: 16px;
    height: 14px;
    background: #d4d0c8;
    border: 1px solid;
    border-color: #fff #404040 #404040 #fff;
    box-shadow: inset -1px -1px #808080;
    line-height: 0;
}

.controls .close {
    margin-left: 2px;
}

.controls svg {
    width: 12px;
    height: 10px;
    fill: none;
    stroke: #000;
}

.client {
    border: 1px solid;
    border-color: #808080 #fff #fff #808080;
    box-shadow: inset 1px 1px #404040;
    padding: 1px 0 0 1px;
    background: #000;
}

.inactive .client {
    background: #c0c0c0;
}

.client > svg {
    display: block;
    width: 100%;
}

/* waveform plot */
.plot {
    font: 13px "DejaVu Sans", sans-serif;
    fill: none;
}

.grid {
    stroke: #6e6e6e;
    stroke-dasharray: 5 3;
}

.axis {
    stroke: #b0b0b0;
}

.trace {
    stroke: #ff8000;
}

.trace .dashed {
    stroke-dasharray: 4 3;
}

.ylabels,
.xlabels {
    fill: #b8b8b8;
}

.ylabels {
    text-anchor: end;
}

.xlabels {
    text-anchor: middle;
}

.plot .name {
    fill: #ff8000;
    stroke: #ff8000;
    stroke-width: .3;
    font-size: 12px;
}

/* schematic */
.net {
    fill: none;
    stroke: #00f;
    stroke-width: 3;
}

.part {
    fill: none;
    stroke: #000080;
    stroke-width: 3;
}

.fill {
    fill: #000080;
}

.node {
    stroke: #00f;
    stroke-width: 5;
    stroke-linecap: square;
}

.pin {
    fill: none;
    stroke: #00f;
    stroke-width: 2;
}

.labels {
    font: 8px "Liberation Sans", Arial, sans-serif;
    fill: #000;
    stroke: #000;
    stroke-width: .4;
}

.labels text {
    white-space: pre;
}

.comment {
    fill: #0000c8;
    stroke: #0000c8;
}

/* status bar */
.status {
    height: 23px;
    display: flex;
    align-items: center;
    justify-content: space-between;
    padding: 4px 0 0 4px;
    border-top: 1px solid #404040;
}

.status .cell {
    height: 18px;
    padding: 2px 5px 0 3px;
    border: 1px solid;
    border-color: #808080 #fff #fff #808080;
}

/* cursor readout */
.dialog {
    position: absolute;
    left: 227px;
    top: 267px;
    width: 287px;
    padding: 0 3px 4px;
    border-radius: 6px 6px 4px 4px;
    background: #444;
    box-shadow: inset 0 0 0 1px #5a5a5a;
}

.dialog-title {
    height: 23px;
    display: flex;
    align-items: center;
    justify-content: space-between;
    padding: 0 12px 2px 4px;
    color: #808080;
}

.dialog-title h2 {
    font: bold 12px "DejaVu Sans", sans-serif;
}

.dialog-body {
    background: #d4d0c8;
    padding: 1px 1px 2px;
}

fieldset {
    min-width: 0;
    margin: 0;
    padding: 0 0 0 3px;
    border: 1px solid #808080;
    box-shadow: 0 1px #fff;
}

fieldset + fieldset {
    margin-top: 1px;
}

legend {
    height: 12px;
    margin-left: 3px;
    padding: 0 2px;
    line-height: 12px;
}

.channel {
    height: 17px;
    line-height: 11px;
    text-align: center;
    padding-right: 18px;
}

.readout {
    display: grid;
    grid-template-columns: 27px 92px 1fr 92px 19px;
    grid-auto-rows: 21px;
    align-items: start;
}

.readout label {
    text-align: right;
    padding-right: 3px;
    line-height: 20px;
    white-space: nowrap;
}

.readout label + input + label {
    padding-right: 6px;
}

.readout .third {
    grid-column: 1 / 4;
    padding-right: 6px;
}

.readout input[type="text"] {
    width: 92px;
    height: 19px;
    padding: 0 0 0 2px;
    border: 1px solid;
    border-color: #808080 #fff #fff #808080;
    box-shadow: inset 1px 1px #404040;
    background: #fff;
    font: inherit;
    color: #000;
}

.readout input.strong {
    box-shadow: inset 0 0 0 1px #111;
}

.readout input[type="radio"] {
    appearance: none;
    width: 11px;
    height: 11px;
    margin: 4px 0 0 5px;
    border: 1px solid;
    border-color: #606060 #fff #fff #606060;
    border-radius: 50%;
    background: #fff;
}

.readout input[type="radio"]:checked {
    background: radial-gradient(#000 0 2px, #fff 3px);
}

.readout input.dim {
    background: #d4d0c8;
}

fieldset:disabled {
    color: #808080;
}

fieldset:disabled legend {
    text-shadow: 1px 1px #fff;
}

fieldset:disabled .channel {
    height: 18px;
}

fieldset:disabled input[type="text"] {
    background: #d4d0c8;
    color: #808080;
    padding-left: 9px;
}

fieldset:disabled input.strong {
    box-shadow: inset 0 0 0 1px #808080;
}

fieldset:disabled input[type="radio"] {
    background: #d4d0c8;
}

.ratio {
    margin-right: 18px;
}

.ratio legend {
    margin: 0 4px 0 auto;
}

.ratio .readout {
    padding-top: 4px;
    grid-template-columns: 27px 92px 1fr 92px 1px;
}
```
